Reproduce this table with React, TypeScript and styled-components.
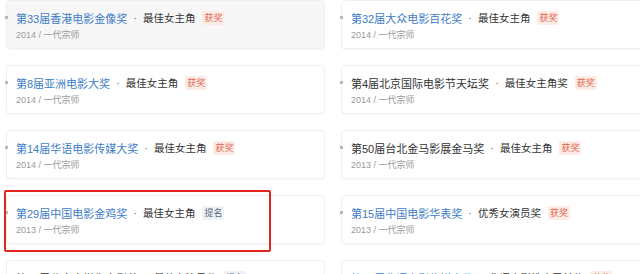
import styled, { createGlobalStyle } from "styled-components";

const GlobalStyle = createGlobalStyle`
  html, body {
    margin: 0;
    padding: 0;
    background: #ffffff;
    overflow: hidden;
  }
  body {
    font-family: "Liberation Sans", "Noto Sans CJK SC", sans-serif;
  }
`;

type Award = {
  festival: string;
  linked: boolean;
  role: string;
  result: "获奖" | "提名";
  year: string;
  hovered?: boolean;
  marked?: boolean;
};

const awards: Award[] = [
  { festival: "第33届香港电影金像奖", linked: true, role: "最佳女主角", result: "获奖", year: "2014", hovered: true },
  { festival: "第32届大众电影百花奖", linked: true, role: "最佳女主角", result: "获奖", year: "2014" },
  { festival: "第8届亚洲电影大奖", linked: true, role: "最佳女主角", result: "获奖", year: "2014" },
  { festival: "第4届北京国际电影节天坛奖", linked: false, role: "最佳女主角奖", result: "获奖", year: "2014" },
  { festival: "第14届华语电影传媒大奖", linked: true, role: "最佳女主角", result: "获奖", year: "2014" },
  { festival: "第50届台北金马影展金马奖", linked: false, role: "最佳女主角", result: "获奖", year: "2013" },
  { festival: "第29届中国电影金鸡奖", linked: true, role: "最佳女主角", result: "提名", year: "2013", marked: true },
  { festival: "第15届中国电影华表奖", linked: true, role: "优秀女演员奖", result: "获奖", year: "2013" },
  { festival: "第20届北京大学生电影节", linked: false, role: "最佳女演员奖", result: "提名", year: "2013" },
  { festival: "第19届华语电影传媒大奖", linked: true, role: "华语电影推广贡献奖", result: "获奖", year: "2013" },
];

// ---------------- Styled Components ----------------
const Page = styled.div`
  width: 660px;
  padding: 0 0 0 6px;
  box-sizing: border-box;
`;

const Grid = styled.ul`
  list-style: none;
  margin: 0;
  padding: 0;
  display: grid;
  grid-template-columns: 319px 319px;
  column-gap: 16px;
  row-gap: 16px;
`;

const Card = styled.li<{ $hovered?: boolean }>`
  position: relative;
  height: 49px;
  box-sizing: border-box;
  padding: 8px 8px 0 9px;
  border: 1px solid #f0f0f0;
  border-radius: 4px;
  background: ${({ $hovered }) => ($hovered ? "#f7f7f7" : "#ffffff")};
  box-shadow: 0 1px 2px rgba(0, 0, 0, 0.03);

  &::before {
    content: "";
    position: absolute;
    left: -2px;
    top: 15px;
    width: 3px;
    height: 3px;
    background: #b9b9b9;
  }
`;

const TitleRow = styled.div`
  display: flex;
  align-items: center;
  height: 17px;
  white-space: nowrap;
`;

const Festival = styled.span<{ $linked: boolean }>`
  font-size: 11px;
  color: ${({ $linked }) => ($linked ? "#3d7cc8" : "#333333")};
`;

const Dot = styled.span`
  margin: 0 6px;
  font-size: 11px;
  color: #666666;
`;

const Role = styled.span`
  font-size: 10.5px;
  color: #333333;
`;

const Tag = styled.span<{ $won: boolean }>`
  margin-left: 7px;
  padding: 1px 2px;
  line-height: 12px;
  font-size: 9px;
  border-radius: 2px;
  color: ${({ $won }) => ($won ? "#e2694f" : "#5d6b80")};
  background: ${({ $won }) => ($won ? "#fdebe6" : "#eef1f6")};
`;

const Meta = styled.div`
  margin-top: 3px;
  font-size: 9px;
  line-height: 12px;
  color: #9a9a9a;
`;

const Highlight = styled.div`
  position: absolute;
  left: -3px;
  top: -6px;
  width: 267px;
  height: 62px;
  box-sizing: border-box;
  border: 2px solid #e3241f;
  border-radius: 2px;
  pointer-events: none;
`;

// ---------------- Component ----------------
export default function App() {
  return (
    <Page>
      <GlobalStyle />
      <Grid>
        {awards.map((a) => (
          <Card key={a.festival} $hovered={a.hovered}>
            <TitleRow>
              <Festival $linked={a.linked}>{a.festival}</Festival>
              <Dot>·</Dot>
              <Role>{a.role}</Role>
              <Tag $won={a.result === "获奖"}>{a.result}</Tag>
            </TitleRow>
            <Meta>{a.year} / 一代宗师</Meta>
            {a.marked && <Highlight />}
          </Card>
        ))}
      </Grid>
    </Page>
  );
}
